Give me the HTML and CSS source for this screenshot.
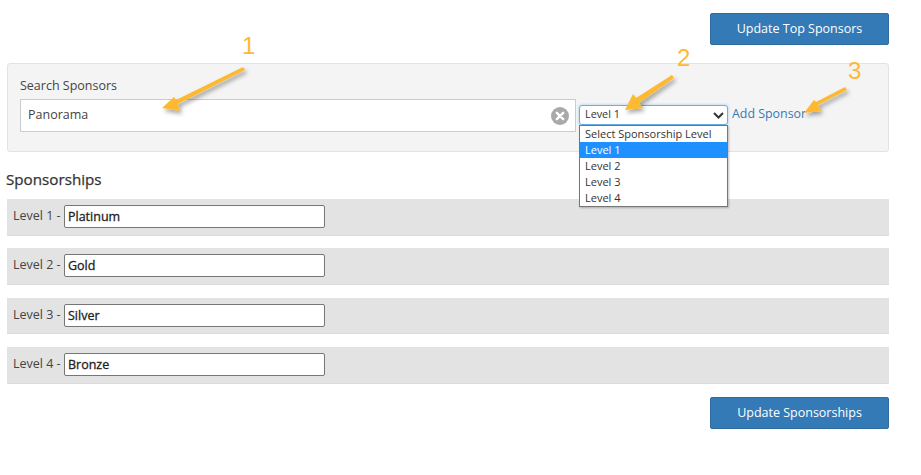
FILE: index.html
```html
<!DOCTYPE html>
<html lang="en">
<head>
<meta charset="utf-8">
<title>Sponsors</title>
<link rel="stylesheet" href="styles.css">
</head>
<body>
<main class="page">
  <div class="actions"><button class="btn" type="button">Update Top Sponsors</button></div>
  <section class="panel">
    <div class="search-col">
      <label class="search-label">Search Sponsors</label>
      <div class="search-box">
        <span>Panorama</span>
        <svg class="clear" width="18" height="18" viewBox="0 0 18 18"><circle cx="9" cy="9" r="9" fill="#a9a9a9"/><path d="M5.8 5.8l6.4 6.4M12.200 5.800l-6.400 6.400" stroke="#fff" stroke-width="2.400" stroke-linecap="round"/></svg>
      </div>
    </div>
    <div class="select-wrap">
      <div class="select">
        <span class="select-value">Level 1</span>
        <svg width="11" height="7" viewBox="0 0 11 7"><path d="M1 1l4.500 4.500L10 1" fill="none" stroke="#333" stroke-width="2"/></svg>
      </div>
      <ul class="menu">
        <li>Select Sponsorship Level</li>
        <li class="active">Level 1</li>
        <li>Level 2</li>
        <li>Level 3</li>
        <li>Level 4</li>
      </ul>
    </div>
    <a class="add" href="#">Add Sponsor</a>
  </section>
  <h2 class="title">Sponsorships</h2>
  <div class="rows">
    <div class="row"><label>Level 1 -</label><div class="field">Platinum</div></div>
    <div class="row"><label>Level 2 -</label><div class="field">Gold</div></div>
    <div class="row"><label>Level 3 -</label><div class="field">Silver</div></div>
    <div class="row"><label>Level 4 -</label><div class="field">Bronze</div></div>
  </div>
  <div class="actions lower"><button class="btn" type="button">Update Sponsorships</button></div>
</main>
<svg class="annotations" width="921" height="475" viewBox="0 0 921 475">
  <defs>
    <filter id="sh" x="-30%" y="-30%" width="160%" height="160%"><feDropShadow dx="2" dy="3" stdDeviation="2" flood-color="#000" flood-opacity=".35"/></filter>
  </defs>
  <g fill="#fdb933" filter="url(#sh)">
    <path d="M243 67L245 70 178 104 180 111 162 108 174 97 176 100Z"/>
    <path d="M672 75L674 78 639 103 643 108 625 110 633 94 636 98Z"/>
    <path d="M845 87L847 90 818 105 821 111 804 113 814 100 816 102Z"/>
  </g>
  <g class="num">
    <text x="242" y="54">1</text>
    <text x="677" y="66">2</text>
    <text x="848" y="79">3</text>
  </g>
</svg>
</body>
</html>
```
FILE: styles.css
```css
* { box-sizing: border-box; }
html, body { margin: 0; padding: 0; background: #fff; }
body { font-family: "Open Sans", sans-serif; font-size: 13px; color: #333; width: 921px; height: 475px; overflow: hidden; position: relative; }
.page { padding: 13px 32px 0 7px; }
.actions { display: flex; justify-content: flex-end; }
.lower { margin-top: 1px; }
.btn { width: 179px; height: 32px; background: #337ab7; border: 1px solid #2e6da4; border-radius: 2px; color: #fff; font: 12.500px/28px "Open Sans", sans-serif; padding: 0; }
.panel { margin-top: 18px; height: 89px; background: #f4f4f4; border: 1px solid #e3e3e3; border-radius: 3px; padding: 14px 12px 0; display: flex; align-items: flex-start; }
.search-col { width: 556px; }
.search-label { display: block; line-height: 16px; margin-bottom: 5px; font-size: 12.500px; color: #444; }
.search-box { height: 33px; background: #fff; border: 1px solid #ccc; display: flex; align-items: center; justify-content: space-between; padding: 0 6px 2px 7px; font-size: 12.500px; color: #444; }
.clear { margin-top: 2px; }
.select-wrap { position: relative; margin: 27px 0 0 3px; width: 149px; }
.select { height: 20px; background: #fff; border: 1px solid #66afe9; border-radius: 3px; box-shadow: 0 0 3px rgba(102,175,233,.6); display: flex; align-items: center; justify-content: space-between; padding: 0 3px 0 5px; font-size: 10.800px; }
.select-value { line-height: 16px; margin-bottom: 2px; }
.menu { position: absolute; left: 0; top: 20px; width: 149px; height: 82px; margin: 0; padding: 0; list-style: none; background: #fff; border: 1px solid #767676; box-shadow: 1px 1px 2px rgba(0,0,0,.25); font-size: 11px; z-index: 2; }
.menu li { height: 16px; line-height: 16px; padding-left: 5px; white-space: nowrap; }
.menu .active { background: #1e90ff; color: #fff; }
.add { margin: 28px 0 0 4px; color: #337ab7; text-decoration: none; font-size: 12.400px; line-height: 16px; }
.title { margin: 17px 0 0 -1px; font-size: 15.200px; font-weight: 400; -webkit-text-stroke: .25px #333; line-height: 20px; color: #333; }
.rows { margin-top: 10.100px; display: flex; flex-direction: column; }
.row { height: 36.600px; margin-bottom: 12.730px; background: #e3e3e3; border-bottom: 1px solid #dcdcdc; padding: 6px 0 0 6px; display: flex; align-items: flex-start; font-size: 12.500px; }
.row label { line-height: 21px; width: 51px; color: #444; }
.field { width: 261px; height: 23px; background: #fff; border: 1px solid #767676; border-radius: 2px; padding-left: 3px; line-height: 21px; font-size: 12.500px; -webkit-text-stroke: .3px #222; color: #222; }
.annotations { position: absolute; left: 0; top: 0; pointer-events: none; z-index: 5; }
.num { font-family: "Liberation Sans", sans-serif; font-size: 24px; fill: #fdb933; }
```
